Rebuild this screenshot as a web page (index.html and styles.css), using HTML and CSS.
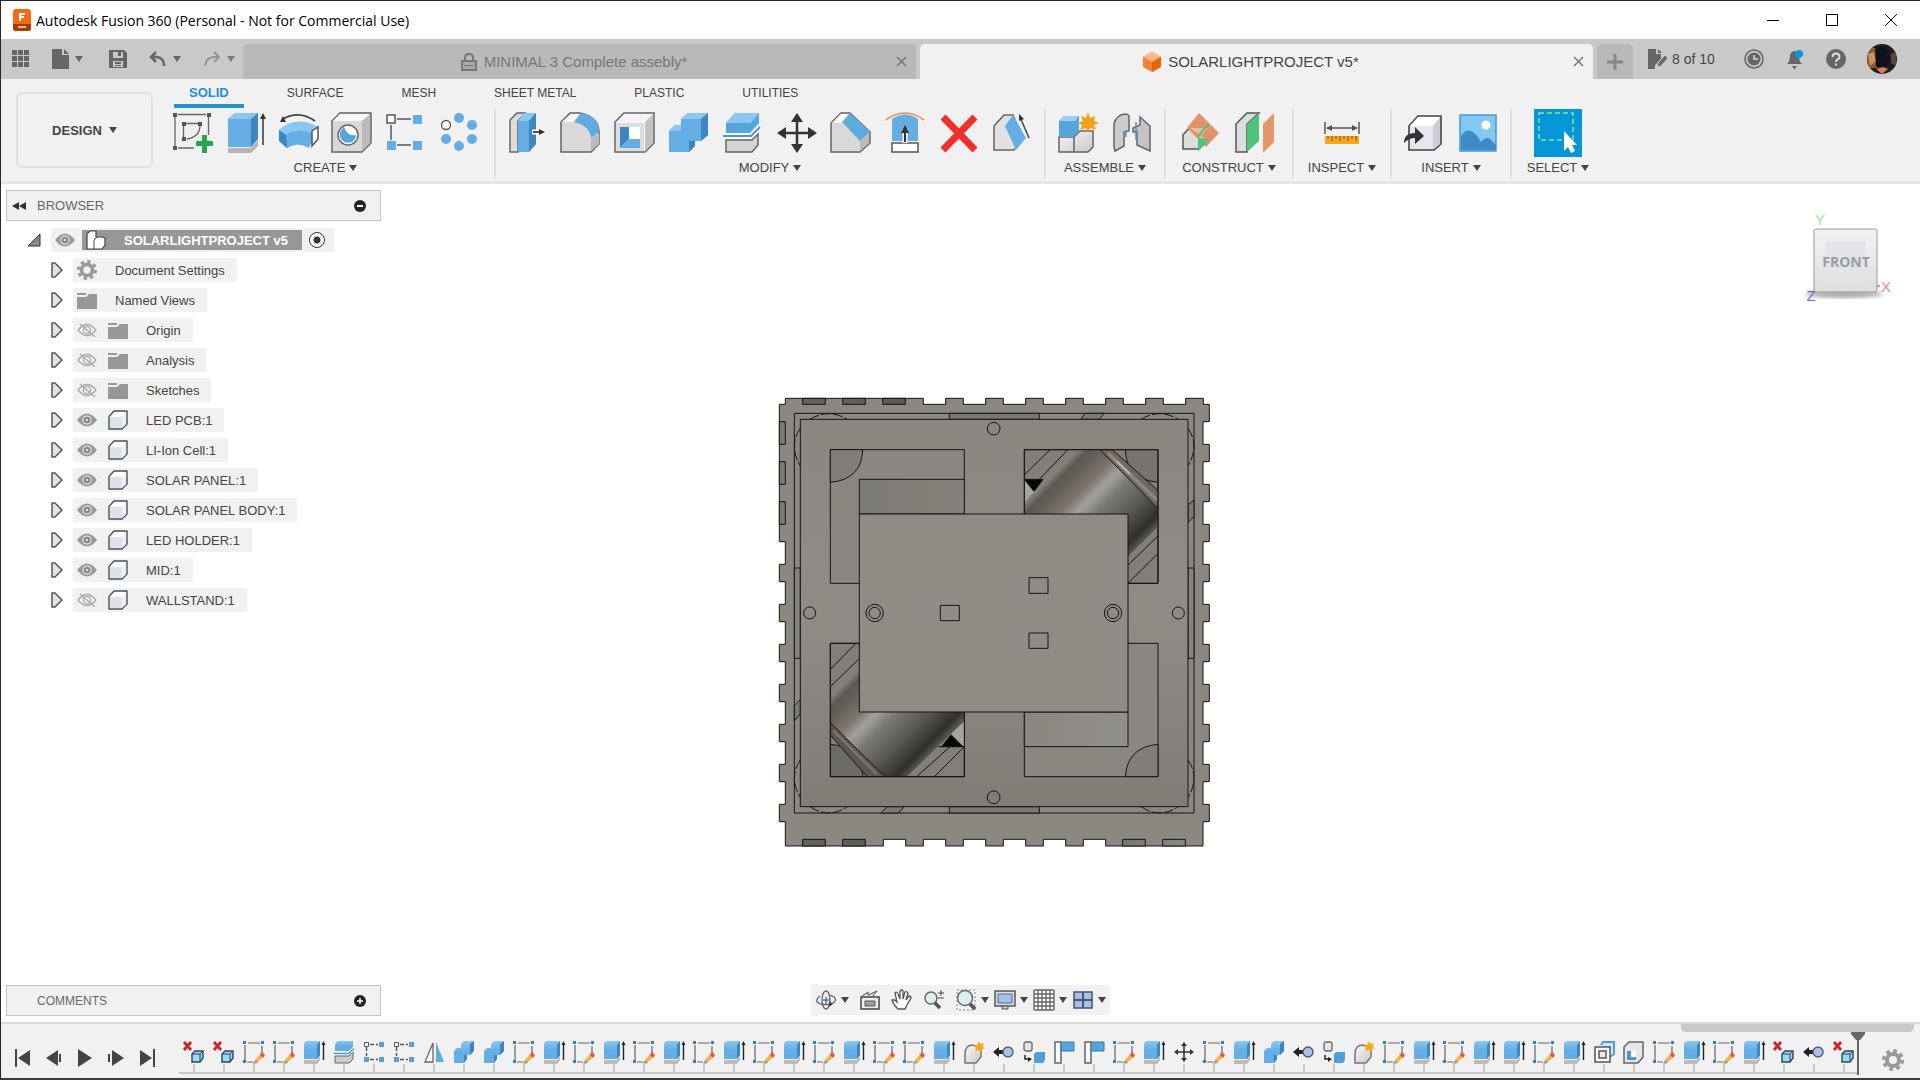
FILE: index.html
```html
<!DOCTYPE html>
<html lang="en">
<head>
  <meta charset="UTF-8" />
  <meta name="viewport" content="width=device-width, initial-scale=1.0" />
  <title>Autodesk Fusion 360 (Personal - Not for Commercial Use)</title>
  <link rel="stylesheet" href="styles.css">
</head>
<body>
  <!-- shared icons -->
  <svg class="sprite" aria-hidden="true">
    <defs>
      <linearGradient id="gBlue" x1="0" y1="0" x2="0" y2="1"><stop offset="0" stop-color="#8cc6f2"/><stop offset=".5" stop-color="#64aee4"/></linearGradient>
      <linearGradient id="gGrey" x1="0" y1="0" x2="1" y2="1"><stop offset="0" stop-color="#f8f8f8"/><stop offset="1" stop-color="#c8c8c8"/></linearGradient>
    </defs>
    <symbol id="eye" viewBox="0 0 20 14"><path d="M0 7Q10-6 20 7Q10 20 0 7Z" fill="#9a9a9a"/><circle cx="10" cy="7" r="4.6" fill="#f1f1f1"/><circle cx="10" cy="7" r="3.6" fill="#8c8c8c"/><circle cx="10" cy="7" r="1.1" fill="#f1f1f1"/></symbol>
    <symbol id="eye-off" viewBox="0 0 20 14"><g fill="none" stroke="#a8a8a8" stroke-width="1.3"><path d="M1 7Q10-4 19 7Q10 18 1 7Z"/><circle cx="10" cy="7" r="3.6"/><path d="M3 1l15 13"/></g></symbol>
    <symbol id="folder" viewBox="0 0 20 17"><path d="M0 1h9v2H0zM0 5h9l3-3h8v15H0z" fill="#979797"/></symbol>
    <symbol id="body" viewBox="0 0 20 20"><path d="M1 6.500L6 1h13v13l-5 5H1z" fill="#fff" stroke="#4a4f58" stroke-width="1.4" stroke-linejoin="round"/><path d="M2 7h12v11H2z" fill="#dfe2ea"/><path d="M14 7l4-5v12l-4 4z" fill="#eef0f5"/></symbol>
    <symbol id="gear" viewBox="0 0 20 20"><circle cx="10" cy="10" r="5.500" fill="none" stroke="#999" stroke-width="3.600"/><circle cx="10" cy="10" r="8.500" fill="none" stroke="#999" stroke-width="3" stroke-dasharray="3.340 3.340"/></symbol>
    <symbol id="arrow" viewBox="0 0 12 16"><path d="M1 1h3l7 7-7 7H1z" fill="#e4e4e4" stroke="#555" stroke-width="1.5" stroke-linejoin="round"/></symbol>

    <symbol id="t-remove" viewBox="0 0 24 24"><path d="M2 2l7 8M9 2l-7 8" stroke="#c9252b" stroke-width="2.800"/><path d="M10 14l3-3h8v7l-3 4h-8z" fill="#9bd8f6" stroke="#2f4557" stroke-width="1.400"/><path d="M10 14h8v8M18 14l3-3" fill="none" stroke="#2f4557"/></symbol>
    <symbol id="t-sketch" viewBox="0 0 24 24"><path d="M3 5v16M6 3h12M20 6v7M5 22h6" stroke="#666" stroke-width="1.200" fill="none"/><path d="M1 1h3v3H1zM19 1h3v3h-3zM1 20h3v3H1z" fill="#2f80c2"/><path d="M13 20l6-7 3 3-7 7z" fill="#f4b24b"/><path d="M18 15l2-3 3 3-2 3z" fill="#e9503f"/><path d="M11 24l2-4 3 3z" fill="#999"/></symbol>
    <symbol id="t-extrude" viewBox="0 0 24 24"><path d="M2 20h13l3-4v4l-3 4H2z" fill="#bbb"/><path d="M2 5q0-4 4-4h12v14l-3 4H2z" fill="url(#gBlue)"/><path d="M15 5l3-4v14l-3 4z" fill="#3c87c1"/><path d="M21.500 4v16" stroke="#222" stroke-width="1.400"/><path d="M19.500 5l2-4 2 4z" fill="#222"/></symbol>
    <symbol id="t-split" viewBox="0 0 24 24"><path d="M3 16h14l4-4v7l-4 4H3z" fill="#ccc" stroke="#666"/><path d="M3 5q1-4 4-4h14v6l-4 4H3z" fill="url(#gBlue)"/><path d="M2 13.500h15l5-5" stroke="#fff" stroke-width="3" fill="none"/><path d="M2 13.500h15l5-5" stroke="#4297d3" stroke-width="1.300" fill="none"/></symbol>
    <symbol id="t-pattern" viewBox="0 0 24 24"><path d="M4.500 7v9M8 4.500h8M8 19.500h8" stroke="#555" stroke-width="1.400" stroke-dasharray="4 2"/><path d="M2.500 2.500h4v4h-4z" fill="#fff" stroke="#555"/><path d="M17 2h5v5h-5zM2 17h5v5H2zM17 17h5v5h-5z" fill="#5c9fd0"/></symbol>
    <symbol id="t-mirror" viewBox="0 0 24 24"><path d="M11 3v19H3z" fill="#fff" stroke="#666" stroke-width="1.300"/><path d="M14 2v20h8z" fill="#5fabdf"/></symbol>
    <symbol id="t-combine" viewBox="0 0 24 24"><path d="M2 11l3-3h4V4l3-3h10v10l-4 4h-3v4l-3 4H2z" fill="url(#gBlue)"/><path d="M18 4l4-3v10l-4 4zM12 15h3v4l-3 4z" fill="#3c87c1"/></symbol>
    <symbol id="t-comp" viewBox="0 0 24 24"><path d="M3 14q0-9 8-9l8 3v9l-5 6H3z" fill="url(#gGrey)" stroke="#777" stroke-width="1.500"/><path d="M17 1l1.500 3 3.500-1-1.500 3.500 2.500 2-3.500.5-.5 3.500-2.500-2.500-3.500 1.500 1-3.500-2.500-2.500 3.500-.5z" fill="#f7a81b"/></symbol>
    <symbol id="t-rigid" viewBox="0 0 24 24"><path d="M1 12l6-5v3h5v4H7v3z" fill="#222"/><circle cx="16" cy="12" r="5" fill="#aebfe5" stroke="#4e5b78" stroke-width="1.400"/></symbol>
    <symbol id="t-copy" viewBox="0 0 24 24"><rect x="2" y="2" width="8" height="9" rx="2" fill="#e5e5e5" stroke="#666" stroke-width="1.300"/><path d="M3 15v4h5" stroke="#222" stroke-width="1.500" fill="none"/><path d="M6 17l4 2-4 3z" fill="#222"/><path d="M12 14l2-2h9v8l-2 3h-9z" fill="#4e9fd9"/></symbol>
    <symbol id="t-flag" viewBox="0 0 24 24"><path d="M3 2h6v21H3z" fill="#fafafa" stroke="#666" stroke-width="1.500"/><path d="M9 2h13v9H9z" fill="#57a3dc" stroke="#397daf"/></symbol>
    <symbol id="t-move" viewBox="0 0 24 24"><path d="M12 4v16M4 12h16" stroke="#333" stroke-width="1.600"/><path d="M9 6l3-4 3 4zM9 18l3 4 3-4zM6 9l-4 3 4 3zM18 9l4 3-4 3z" fill="#333"/></symbol>
    <symbol id="t-offset" viewBox="0 0 24 24"><path d="M9 5l2-3h11v12l-4 3" fill="#cfe6f6" stroke="#4e9fd9" stroke-width="2"/><path d="M3 7h15v15H3z" fill="#fff" stroke="#555" stroke-width="1.500"/><path d="M7 11h7v7H7z" fill="#eee" stroke="#555" stroke-width="1.500"/></symbol>
    <symbol id="t-shell" viewBox="0 0 24 24"><path d="M2 7l5-5h14v15l-5 6H2z" fill="#e6e6e6" stroke="#666" stroke-width="1.500"/><path d="M5 11h9v9H5z" fill="#fff"/><path d="M5 11h4v6h5v3H5z" fill="#4e96cd"/></symbol>
  </svg>

  <header class="titlebar">
    <svg class="app-logo" width="18" height="22" viewBox="0 0 18 22"><rect width="18" height="22" rx="3" fill="#f36c10"/><path d="M0 15h18v4q0 3-3 3H3q-3 0-3-3z" fill="#a93b05"/><path d="M6 4h6v2H8v1h3v2H8v3H6z" fill="#fff"/><path d="M5 18h8" stroke="#eebb9b" stroke-width="2"/></svg>
    <h1 class="app-title">Autodesk Fusion 360 (Personal - Not for Commercial Use)</h1>
    <div class="win-buttons">
      <button aria-label="Minimize"><svg width="14" height="14"><path d="M1 7.500h12" stroke="#000"/></svg></button>
      <button aria-label="Maximize"><svg width="14" height="14"><path d="M1.500 1.500h11v11h-11z" fill="none" stroke="#000"/></svg></button>
      <button aria-label="Close"><svg width="14" height="14"><path d="M1 1l12 12M13 1L1 13" stroke="#000"/></svg></button>
    </div>
  </header>

  <div class="tabbar">
    <div class="quick">
      <button aria-label="Data panel"><svg width="18" height="18" fill="#666"><path d="M0 0h5v5H0zM6 0h5v5H6zM12 0h5v5h-5zM0 6h5v5H0zM6 6h5v5H6zM12 6h5v5h-5zM0 12h5v5H0zM6 12h5v5H6zM12 12h5v5h-5z"/></svg></button>
      <button class="drop" aria-label="File"><svg width="17" height="20" fill="#666"><path d="M0 0h10v6h7v14H0zM12 0l5 5h-5z"/></svg><i class="caret"></i></button>
      <button class="save" aria-label="Save"><svg width="18" height="18"><path d="M0 0h15l3 3v15H0z" fill="#666"/><path d="M4 2h10v6H4zM4 11h10v6H4z" fill="#c9c9c9"/><path d="M9 2h3v4H9zM6 12h6v2H6zM6 15h6v1H6z" fill="#666"/></svg></button>
      <button class="drop" aria-label="Undo"><svg width="18" height="18" viewBox="0 0 18 18"><path d="M7 2L2 7l5 5M2 7h6q7 1 7 9" fill="none" stroke="#666" stroke-width="2.500"/></svg><i class="caret"></i></button>
      <button class="drop redo" aria-label="Redo"><svg width="18" height="18" viewBox="0 0 18 18"><path d="M11 2l5 5-5 5M16 7h-6q-7 1-8 9" fill="none" stroke="#888" stroke-width="2"/></svg><i class="caret"></i></button>
    </div>
    <div class="doc-tab">
      <a href="#" class="doc-name"><svg width="16" height="18" viewBox="0 0 16 18"><path d="M4 8V5q0-4 4-4t4 4v3" fill="none" stroke="#777" stroke-width="2"/><path d="M1 8h14v9H1z" fill="#aaa" stroke="#777" stroke-width="2"/><path d="M3 12.500h10" stroke="#777"/></svg>MINIMAL 3 Complete assebly*</a>
      <button class="close" aria-label="Close tab"><svg width="11" height="11"><path d="M1 1l9 9M10 1L1 10" stroke="#777" stroke-width="1.500"/></svg></button>
    </div>
    <div class="doc-tab active">
      <a href="#" class="doc-name"><svg width="18" height="20" viewBox="0 0 18 20"><path d="M9 0l9 5v10l-9 5-9-5V5z" fill="#f58232"/><path d="M9 0l9 5-9 5-9-5z" fill="#fbb784"/><path d="M9 10l9-5v10l-9 5z" fill="#e8630c"/></svg>SOLARLIGHTPROJECT v5*</a>
      <button class="close" aria-label="Close tab"><svg width="11" height="11"><path d="M1 1l9 9M10 1L1 10" stroke="#777" stroke-width="1.500"/></svg></button>
    </div>
    <button class="new-tab" aria-label="New tab"><svg width="16" height="16"><path d="M8 0v16M0 8h16" stroke="#888" stroke-width="3"/></svg></button>
    <div class="account">
      <a href="#" class="doc-count"><svg width="20" height="20" viewBox="0 0 20 20"><path d="M0 0h8v5h5v5l-6 6v4H0zM10 0l4 4h-4z" fill="#666"/><path d="M9 18l1-4 7-8 3 3-7 8z" fill="#666" stroke="#c9c9c9"/></svg>8 of 10</a>
      <button aria-label="Job status"><svg width="20" height="20" viewBox="0 0 20 20"><circle cx="10" cy="10" r="9" fill="none" stroke="#666" stroke-width="1.500"/><circle cx="10" cy="10" r="6.500" fill="#666"/><path d="M10 6v4h4" stroke="#ddd" stroke-width="1.500" fill="none"/></svg></button>
      <button aria-label="Notifications"><svg width="20" height="20" viewBox="0 0 20 20"><path d="M2 15q3-3 3-8 0-4 4-5 5 1 5 5 0 5 3 8z" fill="#666"/><path d="M7 17h5l-2 3H9z" fill="#666"/><circle cx="14" cy="5" r="4" fill="#0a96dc"/></svg></button>
      <button aria-label="Help"><svg width="20" height="20" viewBox="0 0 20 20"><circle cx="10" cy="10" r="10" fill="#666"/><path d="M6.500 8q0-3.500 3.500-3.500T13.500 8q0 1.500-2 2.500Q10 11 10 13M10 14.500v2" stroke="#ddd" stroke-width="2" fill="none"/></svg></button>
      <button aria-label="Profile"><svg width="30" height="30" viewBox="0 0 30 30"><defs><clipPath id="av"><circle cx="15" cy="15" r="15"/></clipPath></defs><g clip-path="url(#av)"><path d="M0 0h30v30H0z" fill="#1b1b20"/><path d="M0 4h9l2 20H0z" fill="#8a5a33"/><path d="M1 10l6-2 2 9-6 5z" fill="#c9955e"/><path d="M8 5q6-5 12 0l3 8-4 10H9z" fill="#111218"/><path d="M9 25l7-2 5 2-6 5z" fill="#d97c5a"/><path d="M24 10l5-2v14l-5-3z" fill="#5a4433"/></g></svg></button>
    </div>
  </div>

  <div class="ribbon">
    <div class="workspace"><button class="design">DESIGN <i class="caret"></i></button></div>
    <div class="ribbon-main">
      <nav class="ribbon-tabs">
        <a href="#" class="on">SOLID</a><a href="#">SURFACE</a><a href="#">MESH</a><a href="#">SHEET METAL</a><a href="#">PLASTIC</a><a href="#">UTILITIES</a>
      </nav>
      <div class="groups">
        <section class="group create">
          <div class="tools">
            <button aria-label="Create Sketch"><svg viewBox="0 0 42 42"><path d="M6 2.500h28M3 5v29M36.500 5v18M6 36h16M14 11.500h12M11.500 14v11M28 13q0 12-13 14" fill="none" stroke="#666" stroke-width="1.300"/><path d="M1 1h4v4H1zM35 1h4v4h-4zM1 34h4v4H1zM10 10h4v4h-4zM26 10h4v4h-4zM10 25h4v4h-4z" fill="#555"/><path d="M30 23h5v6h6v5h-6v7h-5v-7h-6v-5h6z" fill="#27a74b"/></svg></button>
            <button aria-label="Extrude"><svg viewBox="0 0 42 42"><path d="M3 36h23l7-8v6l-7 7H3z" fill="#b5b5b5"/><path d="M3 7l7-6h23v26l-7 8H3z" fill="#64aee4"/><path d="M3 7l7-6h23l-7 6z" fill="#8cc6f2"/><path d="M26 7l7-6v26l-7 8z" fill="#3c87c1"/><path d="M38 5v28" stroke="#333" stroke-width="1.500"/><path d="M35 7l3-6 3 6z" fill="#333"/></svg></button>
            <button aria-label="Revolve"><svg viewBox="0 0 42 42"><path d="M1 18Q18 3 40 15l-2 5-7 16Q20 29 9 36L1 29z" fill="#64aee4"/><path d="M1 18Q19 3 40 15l-7 6Q20 15 8 23z" fill="#8cc6f2"/><path d="M1 18l7 5 1 13-8-7z" fill="#3c87c1"/><path d="M34 19l6-4v12l-6 7z" fill="#fff" stroke="#555" stroke-width="1.500"/><path d="M5 7Q21-2 37 9" fill="none" stroke="#444" stroke-width="1.700"/><path d="M2 10l3-6 3 6z" fill="#333"/></svg></button>
            <button aria-label="Hole"><svg viewBox="0 0 42 42"><path d="M1 9l8-8h31v30l-9 9H1z" fill="#d8d8d8" stroke="#666" stroke-width="1.500"/><path d="M2 9l7-7h30l-8 7z" fill="#f8f8f8"/><path d="M31 9l8-7v29l-8 8z" fill="#bbb"/><circle cx="17" cy="23" r="10" fill="#fff" stroke="#666" stroke-width="1.500"/><path d="M13 15q-5 4-4 10 4 8 12 5 4-3 4-7-8 2-12-8z" fill="#55a5dd"/></svg></button>
            <button aria-label="Rectangular Pattern"><svg viewBox="0 0 42 42"><path d="M13 7h14M7 13v15M13 33h14" stroke="#555" stroke-width="1.500"/><path d="M3 3h8v8H3z" fill="#fff" stroke="#555" stroke-width="1.500"/><path d="M29 3h9v9h-9zM3 29h9v9H3zM29 29h9v9h-9z" fill="#64aee4"/></svg></button>
            <button aria-label="Circular Pattern"><svg viewBox="0 0 42 42" fill="#64aee4"><circle cx="22" cy="6" r="5"/><circle cx="35" cy="13" r="5"/><circle cx="35" cy="27" r="5"/><circle cx="22" cy="34" r="5"/><circle cx="9" cy="27" r="5"/><circle cx="9" cy="13" r="4.500" fill="#fff" stroke="#555" stroke-width="1.300"/></svg></button>
          </div>
          <button class="caption">CREATE <i class="caret"></i></button>
        </section>
        <section class="group modify">
          <div class="tools">
            <button aria-label="Press Pull"><svg viewBox="0 0 42 42"><path d="M4 8l7-7h8L12 9v31H4z" fill="#ddd" stroke="#666" stroke-width="1.500"/><path d="M12 9l6-8h12v31l-7 8H12z" fill="#64aee4"/><path d="M12 9l6-8h12l-7 8z" fill="#8cc6f2"/><path d="M23 9l7-8v31l-7 8z" fill="#3c87c1"/><path d="M26 20h9" stroke="#fff" stroke-width="5"/><path d="M27 20h9" stroke="#333" stroke-width="1.700"/><path d="M33 17l6 3-6 3z" fill="#333"/></svg></button>
            <button aria-label="Fillet"><svg viewBox="0 0 42 42"><path d="M1 10l9-9h10q20 4 19 22v9l-8 8H1z" fill="#d9d9d9" stroke="#666" stroke-width="1.500"/><path d="M2 10l9-8h8l-5 8z" fill="#fafafa"/><path d="M14 10l7-9q19 4 18 19l-8 6Q30 14 14 10z" fill="#5fabdf"/><path d="M31 26l8-5v11l-8 7z" fill="#bbb"/></svg></button>
            <button aria-label="Shell"><svg viewBox="0 0 42 42"><path d="M1 10l9-9h30v30l-9 9H1z" fill="#f4f4f4" stroke="#666" stroke-width="1.500"/><path d="M31 10l8-8v29l-8 8z" fill="#c3c3c3"/><path d="M2 11h28v28H2z" fill="#ddd"/><path d="M6 15h20v21H6z" fill="#fff"/><path d="M6 15h9v12l-9 9z" fill="#3c87c1"/><path d="M15 27h11v9H6z" fill="#64aee4"/></svg></button>
            <button aria-label="Combine"><svg viewBox="0 0 42 42"><path d="M1 19l6-6h6V7l7-6h20v22l-7 6h-6v5l-6 6H1z" fill="#64aee4"/><path d="M13 7l7-6h20l-7 6zM1 19l6-6h6v6z" fill="#8cc6f2"/><path d="M33 7l7-6v22l-7 6zM21 29h6v5l-6 6z" fill="#3c87c1"/></svg></button>
            <button aria-label="Split Body"><svg viewBox="0 0 42 42"><path d="M4 28h26l6-6v11l-6 7H4z" fill="#d5d5d5" stroke="#666" stroke-width="1.500"/><path d="M4 11l9-10h24v10l-9 10H4z" fill="#55a5dd"/><path d="M4 11l9-10h24l-8 10z" fill="#8cc6f2"/><path d="M1 24h28l9-9" fill="none" stroke="#fff" stroke-width="5"/><path d="M1 24h28l9-9" fill="none" stroke="#4297d3" stroke-width="2"/></svg></button>
            <button aria-label="Move"><svg viewBox="0 0 42 42"><path d="M21 7v28M7 21h28" stroke="#333" stroke-width="2.500"/><path d="M15 10l6-9 6 9zM15 32l6 9 6-9zM10 15l-9 6 9 6zM32 15l9 6-9 6z" fill="#333"/></svg></button>
            <button aria-label="Chamfer"><svg viewBox="0 0 42 42"><path d="M1 11L11 1h9l20 19v11l-10 9H1z" fill="#d9d9d9" stroke="#666" stroke-width="1.500"/><path d="M2 11l9-9h8l-7 9z" fill="#fafafa"/><path d="M12 10l8-9 20 19-10 9z" fill="#5fabdf"/><path d="M30 29l9-8v10l-9 8z" fill="#bbb"/></svg></button>
            <button aria-label="Thicken"><svg viewBox="0 0 42 42"><path d="M8 7q13-9 26 0v22H8z" fill="#64aee4"/><path d="M2 8Q21-6 40 8" fill="none" stroke="#ea8e55" stroke-width="1.700"/><path d="M8 31h26v9H8z" fill="#fff" stroke="#555" stroke-width="1.500"/><path d="M21 17v14" stroke="#fff" stroke-width="5"/><path d="M21 18v12" stroke="#333" stroke-width="2"/><path d="M17 21l4-8 4 8z" fill="#333"/></svg></button>
            <button aria-label="Delete"><svg viewBox="0 0 42 42"><path d="M5 5l32 33M37 5L5 38" stroke="#f0302d" stroke-width="7"/></svg></button>
            <button aria-label="Draft"><svg viewBox="0 0 42 42"><path d="M2 14l10-11h9l10 24-9 11H2z" fill="#e1e1e1" stroke="#666" stroke-width="1.500"/><path d="M13 14l8-11 13 23-10 12z" fill="#64aee4"/><path d="M28 5l9 21" stroke="#444" stroke-width="1.500"/><path d="M27 9V2l5 5z" fill="#333"/></svg></button>
          </div>
          <button class="caption">MODIFY <i class="caret"></i></button>
        </section>
        <section class="group assemble">
          <div class="tools">
            <button aria-label="New Component"><svg viewBox="0 0 42 42"><path d="M2 25h15V40H2zM17 25l6-6h13v16l-5 5H17z" fill="url(#gGrey)" stroke="#666" stroke-width="1.500"/><path d="M2 9l5-5h15v15l-5 6H2z" fill="#55a5dd"/><path d="M2 9l5-5h15l-4 5z" fill="#9ccff2"/><path d="M31 0l2 6 5-2-1 5 5 2-5 2 2 5-6-2-2 5-2-5-6 2 2-5-4-2 5-2-2-5 5 2z" fill="#f2a01a"/></svg></button>
            <button aria-label="Joint"><svg viewBox="0 0 42 42"><path d="M3 12q2-9 11-10 5 0 4 5v12l-5 1v14l-9 5-1-4z" fill="#ccc" stroke="#666" stroke-width="1.500"/><path d="M29 5l10 9v25l-13-6V20h-4v-4l7-3z" fill="#c4c4c4" stroke="#666" stroke-width="1.500"/><path d="M15 18v7M25 10v18" stroke="#4297d3" stroke-width="1.500"/></svg></button>
          </div>
          <button class="caption">ASSEMBLE <i class="caret"></i></button>
        </section>
        <section class="group construct">
          <div class="tools">
            <button aria-label="Offset Plane"><svg viewBox="0 0 42 42"><path d="M2 23l7-8h15v16l-6 6H2z" fill="#ddd" stroke="#555" stroke-width="1.500"/><path d="M18 1l20 20-13 14L6 16z" fill="#e0936a"/><path d="M9 16h18L18 26v11l8-9" fill="#e8d9c2" opacity=".6"/><path d="M17 24l10-11M18 27v10l8-9z" stroke="#4fc27b" stroke-width="2" fill="#4fc27b"/></svg></button>
            <button aria-label="Midplane"><svg viewBox="0 0 42 42"><path d="M1 12L12 1h12L12 12v28H1z" fill="#ddd" stroke="#555" stroke-width="1.500"/><path d="M12 12L24 1v28L12 40z" fill="#4fc27b"/><path d="M28 12L39 1v29L28 41z" fill="#e6956a"/></svg></button>
          </div>
          <button class="caption">CONSTRUCT <i class="caret"></i></button>
        </section>
        <section class="group inspect">
          <div class="tools">
            <button aria-label="Measure"><svg viewBox="0 0 42 42"><path d="M4 10v12M38 10v12M6 16h30" stroke="#555" stroke-width="1.500"/><path d="M5 16l6-3v6zM37 16l-6-3v6z" fill="#555"/><path d="M4 24h34v8H4z" fill="#f5a81c"/><path d="M7 24v3M11 24v5M15 24v3M19 24v5M23 24v3M27 24v5M31 24v3M35 24v5" stroke="#7a4b00"/></svg></button>
          </div>
          <button class="caption">INSPECT <i class="caret"></i></button>
        </section>
        <section class="group insert">
          <div class="tools">
            <button aria-label="Insert Derive"><svg viewBox="0 0 42 42"><path d="M6 14L15 4h23v28l-7 6H6z" fill="#e6e6ec" stroke="#444" stroke-width="1.600"/><path d="M7 14l8-9h22l-7 9z" fill="#fff"/><path d="M30 14l7-9v27l-7 5z" fill="#cdcdd6"/><path d="M1 31q0-10 11-10v-6l9 9-9 8v-6q-6 0-11 5z" fill="#333"/></svg></button>
            <button aria-label="Insert Image"><svg viewBox="0 0 42 42"><path d="M3 3h36v36H3z" fill="#84c8f6" stroke="#4a97cf" stroke-width="1.500"/><circle cx="29" cy="13" r="4.500" fill="#fffde6"/><path d="M4 24q5-7 10-5t10 11q6-7 10-2l5 5v5H4z" fill="#3c8cc6"/></svg></button>
          </div>
          <button class="caption">INSERT <i class="caret"></i></button>
        </section>
        <section class="group select">
          <div class="tools">
            <button class="picked" aria-label="Select"><svg viewBox="0 0 48 48"><path d="M5 4h34v27H5z" fill="none" stroke="#85e6a5" stroke-width="1.500" stroke-dasharray="5 3"/><path d="M30 22v20l4-4 3 6 4-2-3-6h5z" fill="#fff"/></svg></button>
          </div>
          <button class="caption">SELECT <i class="caret"></i></button>
        </section>
      </div>
    </div>
  </div>

  <main class="canvas">
    <div class="scene">
      <svg class="model" viewBox="0 0 1350 1410">
        <defs>
          <linearGradient id="metal" gradientUnits="userSpaceOnUse" x1="556" y1="556" x2="795" y2="795"><stop offset="0" stop-color="#8b8881"/><stop offset=".08" stop-color="#5b5751"/><stop offset=".2" stop-color="#6b655f"/><stop offset=".3" stop-color="#7d7770"/><stop offset=".4" stop-color="#a2a09d"/><stop offset=".52" stop-color="#7c7a74"/><stop offset=".72" stop-color="#5b5954"/><stop offset=".92" stop-color="#302f2c"/><stop offset="1" stop-color="#5d5b56"/></linearGradient>
          <linearGradient id="shade"><stop offset="0" stop-color="#7c7a74"/><stop offset=".5" stop-color="#85837b"/><stop offset="1" stop-color="#92908a"/></linearGradient>
          <linearGradient id="slot"><stop offset="0" stop-color="#66645f"/><stop offset=".5" stop-color="#504f4b"/><stop offset="1" stop-color="#8a8882"/></linearGradient>
          <linearGradient id="plate" x1="0" y1="0" x2="0" y2="1"><stop offset="0" stop-color="#8a8780"/><stop offset=".5" stop-color="#8f8c85"/><stop offset="1" stop-color="#807d77"/></linearGradient>
          <clipPath id="winTR"><path d="M763 194h401v401h-90V387H763z"/></clipPath>
          <clipPath id="winBL"><path d="M181 775h87v206h315v194H181z"/></clipPath>
        </defs>
        <g stroke="#151515" stroke-width="3" fill="none">
          <!-- toothed outer body -->
          <path fill="#8b8881" d="M46 40H460v18h67v-18h53v18h67v-18h53v18h67v-18h53v18h67v-18h53v18h67v-18h53v18h67v-18h53v18h67v-18h53v18h18v52h-19v68h19v52h-19v68h19v52h-19v68h19v52h-19v68h19v52h-19v68h19v52h-19v68h19v52h-19v68h19v52h-19v68h19v52h-19v68h19v52h-19v68h19v52h-19V1383H1007v-20h-67v20h-53v-20h-67v20h-53v-20h-67v20h-53v-20h-67v20h-53v-20h-67v20h-53v-20h-67v20H46V1310h-18v-52h18v-68h-18v-52h18v-68h-18v-52h18v-68h-18v-52h18v-68h-18v-52h18v-68h-18v-52h18v-68h-18v-52h18v-68h-18V58h18z"/>
          <path fill="url(#slot)" d="M98 40h68v18H98zM218 40h68v18h-68zM338 40h68v18h-68zM98 1363h68v20H98zM218 1363h68v20h-68zM1058 1363h68v20h-68zM1178 1363h68v20h-68z"/>
          <path fill="#7c7a75" d="M28 110h18v68H28zM28 230h18v68H28zM28 350h18v68H28z"/>
          <path d="M73 85h1199v1199H73z"/>
          <path fill="#7a7873" d="M538 85h270v18H538zM538 1265h270v19H538z"/>
          <path fill="#85837e" d="M73 549h18v271H73zM1254 549h18v271h-18z"/>
          <path fill="#7c7a75" d="M932 103l14-18h56l-14 18zM333 1284l18-19h52l-18 19zM73 962l18-18v42l-18 22zM1254 360l18-15v49l-18 19z"/>
          <path stroke-dasharray="30 6" d="M120 103q55-34 112 0M1113 103q55-34 112 0M120 1265q55 38 112 0M1113 1265q55 38 112 0M91 130q-36 50 0 113M1254 130q36 50 0 113M91 1125q-36 50 0 113M1254 1125q36 50 0 113"/>
          <path fill="url(#plate)" d="M91 103h1163v1162H91z"/>
          <!-- corner windows -->
          <path fill="#8a8780" d="M181 194h402v401H181zM763 775h401v400H763z"/>
          <path fill="#807e77" d="M181 194h97q-3 90-97 98zM1164 1078q-92 8-98 97h98z"/>
          <path fill="url(#shade)" d="M268 283h315v104H268zM763 981h311v104H763z"/>
          <path fill="#817f78" d="M763 194h401v401H763zM181 775h402v400H181z"/>
          <g clip-path="url(#winTR)">
            <path d="M763 270l77-76M808 283l86-89M1074 540l90-87M1074 595l90-90"/>
            <path fill="#77746d" d="M1066 194q2 88 98 98v-98z"/>
            <path fill="#a5a49e" stroke="none" d="M763 286l35 34-35 38z"/>
            <path fill="#080808" d="M763 283h56l-27 36z"/>
            <path fill="url(#metal)" stroke="none" d="M763 350L920 194H1026l138 130V425L1000 589H763z"/>
            <path fill="#6e6861" d="M990 194h37l137 123v54z"/>
            <path d="M1015 205l146 140" stroke="#8e8780" stroke-width="10"/>
            <path d="M1040 229l40 38" stroke="#b9b3ac" stroke-width="6"/>
          </g>
          <g clip-path="url(#winBL)">
            <path d="M181 853l77-78M181 905l87-84M440 1175l100-90M493 1175l90-90M505 1085h78"/>
            <path fill="#6d6b66" d="M181 1078q92 8 98 97h-98z"/>
            <path fill="#a5a49e" stroke="none" d="M583 1010v75l-45-35z"/>
            <path fill="#080808" d="M515 1085l28-36 36 36z"/>
            <path fill="url(#metal)" stroke="none" d="M181 931L350 775H583V1008L410 1175H300L181 1050z"/>
            <path fill="#5d5751" d="M181 1013l164 162h-54L181 1050z"/>
            <path d="M190 1037l130 130" stroke="#7d766f" stroke-width="7"/>
          </g>
          <path d="M763 194h401v401h-90M763 194v193M181 981V775h87M181 981v194h402V981"/>
          <!-- led board -->
          <path fill="#8f8c85" d="M268 387h806v594H268z"/>
          <path d="M777 578h57v47h-57zM511 661h57v46h-57zM777 744h57v46h-57z"/>
          <circle cx="671" cy="131" r="19"/><circle cx="671" cy="1237" r="19"/><circle cx="119" cy="684" r="18"/><circle cx="1225" cy="684" r="18"/>
          <circle cx="314" cy="684" r="26"/><circle cx="314" cy="684" r="17"/><circle cx="1029" cy="684" r="26"/><circle cx="1029" cy="684" r="17"/>
        </g>
      </svg>
    </div>
    <svg class="viewcube" viewBox="0 0 130 110">
      <defs>
        <linearGradient id="vc" x1="0" y1="0" x2="0" y2="1"><stop offset="0" stop-color="#f3f3f3"/><stop offset="1" stop-color="#dededf"/></linearGradient>
        <filter id="soft"><feGaussianBlur stdDeviation="2"/></filter>
      </defs>
      <ellipse cx="64" cy="94" rx="39" ry="4" fill="#aaa" filter="url(#soft)"/>
      <rect x="34" y="29" width="63" height="63" rx="2" fill="url(#vc)" stroke="#999"/>
      <path d="M46 41h40v40H46z" fill="#e2e4e8"/>
      <text x="66" y="67" class="face">FRONT</text>
      <text x="40" y="25" class="axis y">Y</text>
      <path d="M97 86h3" stroke="#f08a8a" stroke-width="2"/>
      <text x="106" y="92" class="axis x">X</text>
      <text x="31" y="101" class="axis z">Z</text>
    </svg>

    <aside class="browser">
      <div class="panel-head">
        <svg width="14" height="8"><path d="M7 0v8L0 4zM14 0v8L7 4z" fill="#333"/></svg>
        <h2>BROWSER</h2>
        <button aria-label="Collapse"><svg width="12" height="12"><circle cx="6" cy="6" r="6" fill="#222"/><path d="M3 6h6" stroke="#fff" stroke-width="2"/></svg></button>
      </div>
      <ul class="tree">
        <li class="root">
          <svg width="14" height="14"><path d="M13 1v12H1z" fill="#8a8a8a" stroke="#333"/></svg>
          <div class="node">
            <svg width="20" height="14"><use href="#eye"/></svg>
            <a href="#"><svg width="20" height="20" viewBox="0 0 20 20"><path d="M1 4l3-3h6v6h6l3 1v7l-3 4H1z" fill="#fff" stroke="#444" stroke-width="1.200"/><path d="M8 19v-9l3-3" stroke="#444" fill="none"/></svg>SOLARLIGHTPROJECT v5</a>
            <input type="radio" aria-label="Activate SOLARLIGHTPROJECT v5" checked>
          </div>
        </li>
        <li><svg class="arrow"><use href="#arrow"/></svg><div class="node"><svg width="20" height="20"><use href="#gear"/></svg><a href="#">Document Settings</a></div></li>
        <li><svg class="arrow"><use href="#arrow"/></svg><div class="node"><svg width="20" height="17"><use href="#folder"/></svg><a href="#">Named Views</a></div></li>
        <li><svg class="arrow"><use href="#arrow"/></svg><div class="node"><svg width="20" height="14"><use href="#eye-off"/></svg><svg width="20" height="17"><use href="#folder"/></svg><a href="#">Origin</a></div></li>
        <li><svg class="arrow"><use href="#arrow"/></svg><div class="node"><svg width="20" height="14"><use href="#eye-off"/></svg><svg width="20" height="17"><use href="#folder"/></svg><a href="#">Analysis</a></div></li>
        <li><svg class="arrow"><use href="#arrow"/></svg><div class="node"><svg width="20" height="14"><use href="#eye-off"/></svg><svg width="20" height="17"><use href="#folder"/></svg><a href="#">Sketches</a></div></li>
        <li><svg class="arrow"><use href="#arrow"/></svg><div class="node"><svg width="20" height="14"><use href="#eye"/></svg><svg width="20" height="20"><use href="#body"/></svg><a href="#">LED PCB:1</a></div></li>
        <li><svg class="arrow"><use href="#arrow"/></svg><div class="node"><svg width="20" height="14"><use href="#eye"/></svg><svg width="20" height="20"><use href="#body"/></svg><a href="#">LI-Ion Cell:1</a></div></li>
        <li><svg class="arrow"><use href="#arrow"/></svg><div class="node"><svg width="20" height="14"><use href="#eye"/></svg><svg width="20" height="20"><use href="#body"/></svg><a href="#">SOLAR PANEL:1</a></div></li>
        <li><svg class="arrow"><use href="#arrow"/></svg><div class="node"><svg width="20" height="14"><use href="#eye"/></svg><svg width="20" height="20"><use href="#body"/></svg><a href="#">SOLAR PANEL BODY:1</a></div></li>
        <li><svg class="arrow"><use href="#arrow"/></svg><div class="node"><svg width="20" height="14"><use href="#eye"/></svg><svg width="20" height="20"><use href="#body"/></svg><a href="#">LED HOLDER:1</a></div></li>
        <li><svg class="arrow"><use href="#arrow"/></svg><div class="node"><svg width="20" height="14"><use href="#eye"/></svg><svg width="20" height="20"><use href="#body"/></svg><a href="#">MID:1</a></div></li>
        <li><svg class="arrow"><use href="#arrow"/></svg><div class="node"><svg width="20" height="14"><use href="#eye-off"/></svg><svg width="20" height="20"><use href="#body"/></svg><a href="#">WALLSTAND:1</a></div></li>
      </ul>
    </aside>

    <div class="canvas-foot">
      <div class="panel-head comments">
        <h2>COMMENTS</h2>
        <button aria-label="Add comment"><svg width="12" height="12"><circle cx="6" cy="6" r="6" fill="#222"/><path d="M3 6h6M6 3v6" stroke="#fff" stroke-width="1.500"/></svg></button>
      </div>
      <div class="navbar">
        <button class="drop" aria-label="Orbit"><svg width="22" height="22" viewBox="0 0 22 22"><ellipse cx="11" cy="11" rx="4" ry="9" fill="none" stroke="#666" stroke-width="1.300"/><path d="M5 7q-4 3-3 6 5 4 14 2 7-3 3-7l-4-2" fill="none" stroke="#666" stroke-width="1.300"/><path d="M14 12l4 3-4 3z" fill="#444"/><path d="M11 8v7M8 11h6" stroke="#4a78c8" stroke-width="1.500"/></svg><i class="caret"></i></button>
        <button aria-label="Look At"><svg width="22" height="22" viewBox="0 0 22 22"><path d="M3 7l6-4v3l9-4-4 5" fill="#ddd" stroke="#555"/><path d="M2 8h18v12H2z" fill="#eee" stroke="#444" stroke-width="1.500"/><path d="M6 12h10v5H6z" fill="#99a0aa" stroke="#555"/></svg></button>
        <button aria-label="Pan"><svg width="22" height="22" viewBox="0 0 22 22"><path d="M7 20Q2 15 1 11q2-1 5 2L4 4q2-2 3 1l2 5V2q2-2 3 0v8l2-7q2-1 3 1l-2 7 3-4q2 0 2 2l-4 7-2 4z" fill="#fff" stroke="#555" stroke-width="1.300"/></svg></button>
        <button aria-label="Zoom"><svg width="22" height="22" viewBox="0 0 22 22"><path d="M11 13l6 6" stroke="#555" stroke-width="3.500"/><circle cx="8" cy="9" r="6" fill="#deeef0" stroke="#666" stroke-width="1.500"/><path d="M15 4h6M18 1v6M15 9h6" stroke="#444"/></svg></button>
        <button class="drop" aria-label="Fit"><svg width="22" height="22" viewBox="0 0 22 22"><path d="M2 1h18v20H2z" fill="none" stroke="#888" stroke-dasharray="2 2"/><path d="M14 14l6 6" stroke="#555" stroke-width="3.500"/><circle cx="10" cy="9" r="7.500" fill="#deeef0" stroke="#666" stroke-width="1.500"/></svg><i class="caret"></i></button>
        <button class="drop" aria-label="Display Settings"><svg width="22" height="22" viewBox="0 0 22 22"><path d="M1 2h20v15H1z" fill="#ddd" stroke="#555" stroke-width="1.500"/><path d="M4 5h14v9H4z" fill="#a4c0ea" stroke="#556b88"/><path d="M8 17h6v3H8z" fill="#ccc" stroke="#555"/></svg><i class="caret"></i></button>
        <button class="drop" aria-label="Grid and Snaps"><svg width="22" height="22" viewBox="0 0 22 22"><path d="M1 1h20v20H1z" fill="#fff"/><path d="M1 1v20M5 1v20M9 1v20M13 1v20M17 1v20M21 1v20M1 1h20M1 5h20M1 9h20M1 13h20M1 17h20M1 21h20" stroke="#666" stroke-width="1.400"/></svg><i class="caret"></i></button>
        <button class="drop" aria-label="Viewports"><svg width="22" height="22" viewBox="0 0 22 22"><path d="M2 3h18v16H2z" fill="#a8c0e6" stroke="#46546c" stroke-width="1.500"/><path d="M11 3v16M2 11h18" stroke="#46546c" stroke-width="2"/></svg><i class="caret"></i></button>
      </div>
    </div>
  </main>

  <footer class="timeline">
    <div class="playback">
      <button aria-label="Go to start"><svg width="18" height="20"><path d="M1 1h2v18H1zM16 2v16L4 10z" fill="#444"/></svg></button>
      <button aria-label="Step back"><svg width="18" height="20"><path d="M13 2v16L1 10zM14 6h2v8h-2z" fill="#444"/></svg></button>
      <button aria-label="Play"><svg width="18" height="20"><path d="M2 1v18l14-9z" fill="#444"/></svg></button>
      <button aria-label="Step forward"><svg width="18" height="20"><path d="M5 2v16l12-8zM1 6h2v8H1z" fill="#444"/></svg></button>
      <button aria-label="Go to end"><svg width="18" height="20"><path d="M2 2v16l12-8zM15 1h2v18h-2z" fill="#444"/></svg></button>
    </div>
    <div class="track" id="track"></div>
    <svg class="marker" width="14" height="48"><path d="M0 0h14v7l-5 6H5L0 7zM6 12h2v36H6z" fill="#666"/></svg>
    <button class="settings" aria-label="Timeline settings"><svg width="22" height="22"><use href="#gear"/></svg></button>
    <div class="scroll-thumb"></div>
  </footer>

  <script>
    // timeline features, in the order they were made
    const features = [
      "remove", "remove", "sketch", "sketch", "extrude", "split", "pattern", "pattern", "mirror", "combine", "combine",
      "sketch", "extrude", "sketch", "extrude", "sketch", "extrude", "sketch", "extrude", "sketch", "extrude",
      "sketch", "extrude", "sketch", "sketch", "extrude", "comp", "rigid", "copy", "flag", "flag", "sketch", "extrude",
      "move", "sketch", "extrude", "combine", "rigid", "copy", "comp", "sketch", "extrude", "sketch", "extrude",
      "extrude", "sketch", "extrude", "offset", "shell", "sketch", "extrude", "sketch", "extrude", "remove", "rigid", "remove"
    ];
    document.getElementById("track").innerHTML = features.map(name =>
      `<button class="step" aria-label="${name}"><svg width="24" height="24"><use href="#t-${name}"/></svg></button>`
    ).join("");
  </script>
</body>
</html>
```
FILE: styles.css
```css
* {
  box-sizing: border-box;
}
body {
  margin: 0;
  min-height: 100vh;
  display: flex;
  flex-direction: column;
  border-top: 1px solid #2a2429;
  border-left: 1px solid #2a2429;
  border-bottom: 2px solid #3c3c3c;
  background: #fff;
  color: #444;
  font-family: "Liberation Sans", Arial, sans-serif;
  font-size: 13px;
}
button {
  padding: 0;
  border: none;
  background: none;
  color: inherit;
  font: inherit;
  display: flex;
  align-items: center;
  justify-content: center;
  cursor: pointer;
}
a {
  color: inherit;
  text-decoration: none;
}
h1, h2 {
  margin: 0;
  font-weight: normal;
}
svg {
  display: block;
  flex: none;
}
.sprite {
  position: absolute;
  width: 0;
  height: 0;
}
.caret {
  flex: none;
  border: 4px solid transparent;
  border-top: 6px solid #444;
  border-bottom: none;
}

/* title bar */
.titlebar {
  height: 38px;
  display: flex;
  align-items: center;
  padding-left: 12px;
}
.app-title {
  margin-left: 5px;
  font-family: "Open Sans", "Noto Sans", sans-serif;
  font-size: 14px;
  color: #000;
}
.win-buttons {
  display: flex;
  margin-left: auto;
}
.win-buttons button {
  width: 59px;
  height: 38px;
}

/* document tabs */
.tabbar {
  height: 40px;
  display: flex;
  align-items: flex-end;
  background: #c9c9c9;
}
.quick {
  width: 242px;
  height: 40px;
  display: flex;
  align-items: center;
  padding: 0 8px 0 11px;
  justify-content: space-between;
}
.quick .drop {
  gap: 6px;
}
.quick .save {
  margin-left: 4px;
}
.quick .caret {
  border-top-color: #666;
}
.quick .redo {
  opacity: 0.8;
}
.doc-tab {
  flex: 1;
  height: 35px;
  margin-right: 4px;
  padding: 0 9px;
  display: flex;
  align-items: center;
  background: #b9b9b9;
  border-radius: 5px 5px 0 0;
  color: #777;
  font-size: 15px;
}
.doc-tab.active {
  background: #f1f1f1;
  color: #444;
}
.doc-name {
  flex: 1;
  display: flex;
  justify-content: center;
  align-items: center;
  gap: 7px;
}
.new-tab {
  width: 36px;
  height: 35px;
  background: #b9b9b9;
  border-radius: 5px 5px 0 0;
}
.account {
  width: 287px;
  height: 40px;
  padding: 0 18px 0 15px;
  display: flex;
  align-items: center;
  gap: 21px;
}
.doc-count {
  display: flex;
  align-items: center;
  gap: 4px;
  margin-right: 8px;
  font-size: 14px;
}

/* ribbon */
.ribbon {
  height: 105px;
  display: flex;
  background: #f1f1f1;
  border-bottom: 3px solid #e5e5e5;
}
.workspace {
  width: 171px;
  padding: 13px 0 0 15px;
}
.design {
  width: 137px;
  height: 76px;
  gap: 7px;
  border: 2px solid #e0e0e0;
  border-radius: 6px;
  font-weight: bold;
}
.ribbon-tabs {
  height: 29px;
  display: flex;
  gap: 28px;
  padding-left: 2px;
}
.ribbon-tabs a {
  padding: 0 15px;
  line-height: 28px;
  font-size: 12px;
}
.ribbon-tabs .on {
  border-bottom: 4px solid #2590c9;
  color: #2590c9;
  font-size: 13px;
  font-weight: bold;
}
.groups {
  display: flex;
  padding-top: 1px;
}
.group {
  padding: 0 11px;
  height: 69px;
  border-right: 2px solid #ddd;
}
.group.create {
  padding: 0 15px 0 0;
}
.create .tools {
  gap: 11px;
}
.group.modify {
  padding: 0 10px;
}
.group.construct {
  padding: 0 15px;
}
.group.inspect {
  padding: 0 27px;
}
.group.select {
  padding: 0 22px;
  border-right: none;
}
.tools {
  height: 47px;
  display: flex;
  align-items: center;
  justify-content: center;
  gap: 12px;
}
.tools svg {
  width: 42px;
  height: 42px;
}
.tools .picked {
  background: #0696d7;
}
.tools .picked svg {
  width: 48px;
  height: 48px;
}
/* captions may be wider than their icons, so they must not stretch the group */
.caption {
  width: 0;
  min-width: 100%;
  height: 23px;
  gap: 4px;
  white-space: nowrap;
}

/* canvas */
.canvas {
  flex: 1;
  position: relative;
  display: flex;
  flex-direction: column;
  padding: 6px 5px;
}
.scene {
  position: absolute;
  inset: 0;
  display: flex;
  align-items: center;
  justify-content: center;
  padding: 34px 0 0 68px;
}
.model {
  width: 450px;
  height: 470px;
}
.viewcube {
  position: absolute;
  top: 16px;
  right: 10px;
  width: 130px;
  height: 110px;
}
.face {
  text-anchor: middle;
  font: bold 14px "Open Sans", sans-serif;
  fill: #999ca5;
}
.axis {
  text-anchor: middle;
  font-size: 15px;
}
.axis.x {
  fill: #f08a8a;
}
.axis.y {
  fill: #94e894;
}
.axis.z {
  fill: #6a6ae0;
}
.browser {
  position: relative;
  flex: 1;
  width: 375px;
}
.panel-head {
  width: 375px;
  height: 31px;
  padding: 0 14px 0 5px;
  display: flex;
  align-items: center;
  background: #f1f1f1;
  border: 1px solid #c4c4c4;
  color: #666;
}
.panel-head h2 {
  margin: 0 auto 0 11px;
  font-size: 13px;
}
.comments {
  padding-left: 19px;
}
.comments h2 {
  font-size: 12px;
}
.tree {
  list-style: none;
  margin: 7px 0 0;
  padding: 0;
  display: flex;
  flex-direction: column;
  gap: 6px;
}
.tree li {
  height: 24px;
  padding-left: 45px;
  display: flex;
  align-items: center;
  gap: 10px;
}
.tree .root {
  padding-left: 21px;
}
.arrow {
  width: 12px;
  height: 16px;
}
.node {
  height: 24px;
  padding: 0 12px 0 4px;
  display: flex;
  align-items: center;
  gap: 11px;
  background: #f1f1f1;
}
.node a {
  margin-left: 7px;
}
.root .node {
  padding-right: 9px;
  gap: 7px;
}
.root a {
  height: 20px;
  margin: 0;
  padding: 0 14px 0 4px;
  display: flex;
  align-items: center;
  gap: 18px;
  background: #979797;
  color: #fff;
  font-weight: bold;
}
.root input {
  appearance: none;
  width: 16px;
  height: 16px;
  margin: 0;
  border: 1px solid #333;
  border-radius: 50%;
  background: radial-gradient(#333 0 3px, #fff 4px);
}
.canvas-foot {
  position: relative;
  display: grid;
  grid-template-columns: 1fr auto 1fr;
  align-items: start;
}
.navbar {
  height: 30px;
  padding: 0 4px;
  display: flex;
  align-items: center;
  gap: 10px;
  background: #f1f1f1;
}
.navbar .drop {
  gap: 4px;
}
.navbar .drop + .drop {
  margin-left: -5px;
}

/* timeline */
.timeline {
  position: relative;
  height: 56px;
  display: flex;
  align-items: flex-end;
  background: #f1f1f1;
  border-top: 2px solid #dcdcdc;
}
.playback {
  width: 178px;
  padding: 0 23px 10px 13px;
  display: flex;
  justify-content: space-between;
}
.track {
  display: flex;
  padding-bottom: 4px;
}
.step {
  width: 30px;
  height: 34px;
  align-items: flex-start;
  background: linear-gradient(#c8c8c8, #c8c8c8) center bottom / 2px 8px no-repeat;
  border-bottom: 2px solid #c8c8c8;
}
.marker {
  margin: 0 0 3px -8px;
}
.settings {
  margin: 0 auto 7px;
}
.scroll-thumb {
  position: absolute;
  top: 0;
  right: 6px;
  width: 233px;
  height: 8px;
  background: #c9c9c9;
  border-radius: 0 0 5px 5px;
}
```
